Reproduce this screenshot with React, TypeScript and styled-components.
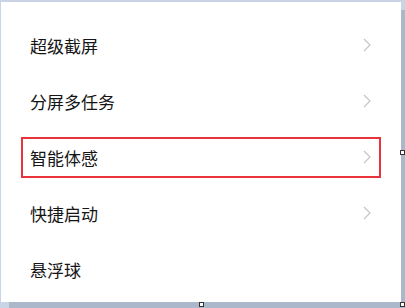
import React from "react";
import styled, { createGlobalStyle } from "styled-components";

const Global = createGlobalStyle`
  html, body { margin: 0; padding: 0; }
  body {
    width: 405px;
    height: 308px;
    overflow: hidden;
    background: #c9d4e6;
    font-family: "Noto Sans CJK SC", "Noto Sans", sans-serif;
  }
`;

const Stage = styled.div`
  position: relative;
  width: 405px;
  height: 308px;
  box-sizing: border-box;
  padding: 2px 4px 6px 1px;
`;

const Panel = styled.div`
  height: 100%;
  background: #ffffff;
  box-shadow: 8px 8px 0 #abb7cb;
  box-sizing: border-box;
  padding-top: 15px;
  display: flex;
  flex-direction: column;
`;

const Row = styled.div`
  height: 56px;
  padding: 0 20px;
  display: flex;
  align-items: center;
`;

const RowBox = styled.div<{ $active?: boolean }>`
  flex: 1;
  height: 41px;
  box-sizing: border-box;
  border: 2px solid ${(p) => (p.$active ? "#e8333b" : "transparent")};
  padding: 0 8px 0 7px;
  display: flex;
  align-items: center;
  justify-content: space-between;
`;

const Label = styled.span`
  font-size: 17px;
  color: #151515;
`;

const Chevron = styled.svg`
  width: 8px;
  height: 14px;
  display: block;
`;

const Handle = styled.div<{ $x: number; $y: number }>`
  position: absolute;
  left: ${(p) => p.$x}px;
  top: ${(p) => p.$y}px;
  width: 5px;
  height: 5px;
  box-sizing: border-box;
  background: #fff;
  border: 1px solid #333;
`;

const items = [
  { label: "超级截屏", arrow: true },
  { label: "分屏多任务", arrow: true },
  { label: "智能体感", arrow: true, active: true },
  { label: "快捷启动", arrow: true },
  { label: "悬浮球", arrow: false },
];

export default function App() {
  return (
    <>
      <Global />
      <Stage>
        <Panel>
          {items.map((it) => (
            <Row key={it.label}>
              <RowBox $active={it.active}>
                <Label>{it.label}</Label>
                {it.arrow && (
                  <Chevron viewBox="0 0 8 14">
                    <path d="M1 1 L7 7 L1 13" fill="none" stroke="#c6c6c6" strokeWidth="1.2" />
                  </Chevron>
                )}
              </RowBox>
            </Row>
          ))}
        </Panel>
        <Handle $x={199} $y={302} />
        <Handle $x={400} $y={302} />
        <Handle $x={400} $y={150} />
      </Stage>
    </>
  );
}
